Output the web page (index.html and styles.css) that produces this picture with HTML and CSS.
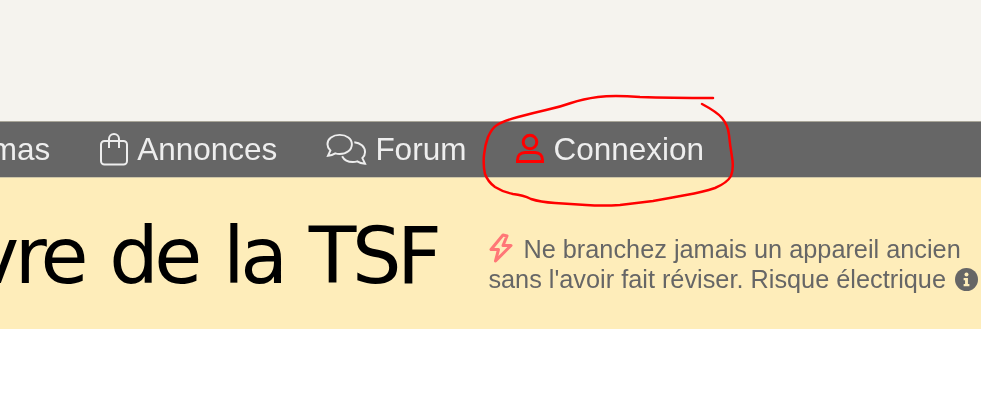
FILE: index.html
```html
<!DOCTYPE html>
<html lang="fr">
<head>
    <meta charset="UTF-8">
    <meta name="viewport" content="width=device-width, initial-scale=1.0">
    <title>Le livre de la TSF</title>
    <link rel="stylesheet" href="styles.css">
</head>
<body>
    <div class="top-space"></div>

    <nav class="main-nav">
        <a class="nav-link" href="#">Schémas</a>
        <a class="nav-link" href="#">
            <svg class="nav-icon" viewBox="0 0 30 33" aria-hidden="true">
                <rect x="2" y="8" width="26" height="23.500" rx="3.500"/>
                <path d="M10 15V6a5 5 0 0 1 10 0v9"/>
            </svg>
            Annonces
        </a>
        <a class="nav-link" href="#">
            <svg class="nav-icon nav-icon-forum" viewBox="0 0 42 33" aria-hidden="true">
                <path d="M14 1.500C7 1.500 1.500 5.500 1.500 11c0 2.700 1.200 4.800 3 6.500L2 23c3.200-.3 5.500-1.200 7.500-2.500 1.400.4 3 .6 4.500.6 7 0 12.500-4.200 12.500-10S21 1.500 14 1.500z"/>
                <path d="M29 9c6 .5 11 4.500 11 10 0 2.500-1 4.600-2.800 6.300L40 31c-3.500-.2-6-1-8-2.300-1.500.5-3 .7-4.500.7-5 0-9-2.200-11-6"/>
            </svg>
            Forum
        </a>
        <a class="nav-link" href="#">
            <svg class="nav-icon nav-icon-user" viewBox="0 0 30 33" aria-hidden="true">
                <circle cx="15" cy="9" r="6.800"/>
                <path d="M2.500 28.500v-1.500c0-4.500 3-7.500 7.500-7.500h10c4.500 0 7.500 3 7.500 7.500v1.500z"/>
            </svg>
            Connexion
        </a>
    </nav>

    <header class="banner">
        <h1 class="site-title">Le livre de la TSF</h1>
        <p class="notice">
            <svg class="bolt" viewBox="0 0 26 32" aria-hidden="true">
                <path d="M15 3 3 17.500h7.500L7.500 29 23 13.500h-8L19 4z"/>
            </svg>
            Ne branchez jamais un appareil ancien<br>
            sans l'avoir fait réviser. Risque électrique
            <svg class="info" viewBox="0 0 24 24" aria-hidden="true">
                <circle cx="12" cy="12" r="12"/>
                <circle class="info-mark" cx="12" cy="6.800" r="2.100"/>
                <path class="info-mark" d="M9 10.500h4.500v6.200H15v2.300H9v-2.300h1.500v-3.900H9z"/>
            </svg>
        </p>
    </header>

    <!-- hand drawn circle around the login link -->
    <svg class="scribble" viewBox="0 0 981 400" aria-hidden="true">
        <path d="M713 98 Q670 98 640 97 Q613 95 598 97 Q583 99 571 103 Q560 107 546 110 Q533 113 518 117 Q503 121 497 125 Q492 128 488 137 Q485 145 484 155 Q483 165 485 174 Q488 182 495 187 Q503 192 513 194 Q523 195 531 199 Q540 202 555 203 Q570 204 586 205 Q603 206 620 205 Q637 203 653 201 Q670 198 686 195 Q703 192 715 188 Q727 183 731 176 Q734 168 732 157 Q730 145 729 135 Q728 125 722 118 Q717 112 702 104"/>
    </svg>
</body>
</html>
```

FILE: styles.css
```css
* {
    margin: 0;
    padding: 0;
    box-sizing: border-box;
}

body {
    position: relative;
    height: 400px;
    overflow: hidden;
    background: #fff;
    font-family: "Liberation Sans", Arial, sans-serif;
}

.top-space {
    height: 121px;
    background: #f5f3ee;
}

.main-nav {
    height: 57px;
    display: flex;
    justify-content: flex-end;
    align-items: center;
    gap: 49px;
    padding-right: 277px;
    background: #666;
    border-top: 1px solid #a8a598;
    border-bottom: 1px solid #cfc7a8;
}

.nav-link {
    display: flex;
    align-items: center;
    gap: 8px;
    flex-shrink: 0;
    color: #eee;
    font-size: 31.500px;
    text-decoration: none;
    white-space: nowrap;
    filter: blur(0.4px);
}

.nav-icon {
    width: 30px;
    height: 33px;
    fill: none;
    stroke: #eee;
    stroke-width: 2;
}

.nav-icon-forum {
    width: 41px;
}

.nav-icon-user {
    stroke: #f00;
    stroke-width: 3;
}

.banner {
    height: 151px;
    display: flex;
    justify-content: flex-end;
    align-items: center;
    gap: 51px;
    padding-right: 3px;
    background: #feedba;
}

.site-title {
    flex-shrink: 0;
    margin-top: 4px;
    color: #000;
    font-family: "DejaVu Sans", Verdana, sans-serif;
    font-size: 78px;
    font-weight: normal;
    letter-spacing: -4.500px;
    word-spacing: 5px;
    white-space: nowrap;
    filter: blur(0.4px);
}

.notice {
    flex-shrink: 0;
    margin-top: 18px;
    color: #666;
    font-size: 25.300px;
    line-height: 30px;
    white-space: nowrap;
    filter: blur(0.4px);
}

.bolt {
    width: 26px;
    height: 32px;
    margin-right: 2px;
    vertical-align: -6px;
    fill: none;
    stroke: #f77;
    stroke-width: 3;
    stroke-linejoin: round;
}

.info {
    width: 23px;
    height: 23px;
    margin-left: 2px;
    vertical-align: -3px;
    fill: #666;
}

.info .info-mark {
    fill: #feedba;
}

.scribble {
    position: absolute;
    top: 0;
    left: 0;
    width: 981px;
    height: 400px;
    fill: none;
    stroke: #f00;
    stroke-width: 2.500;
    stroke-linecap: round;
}
```
